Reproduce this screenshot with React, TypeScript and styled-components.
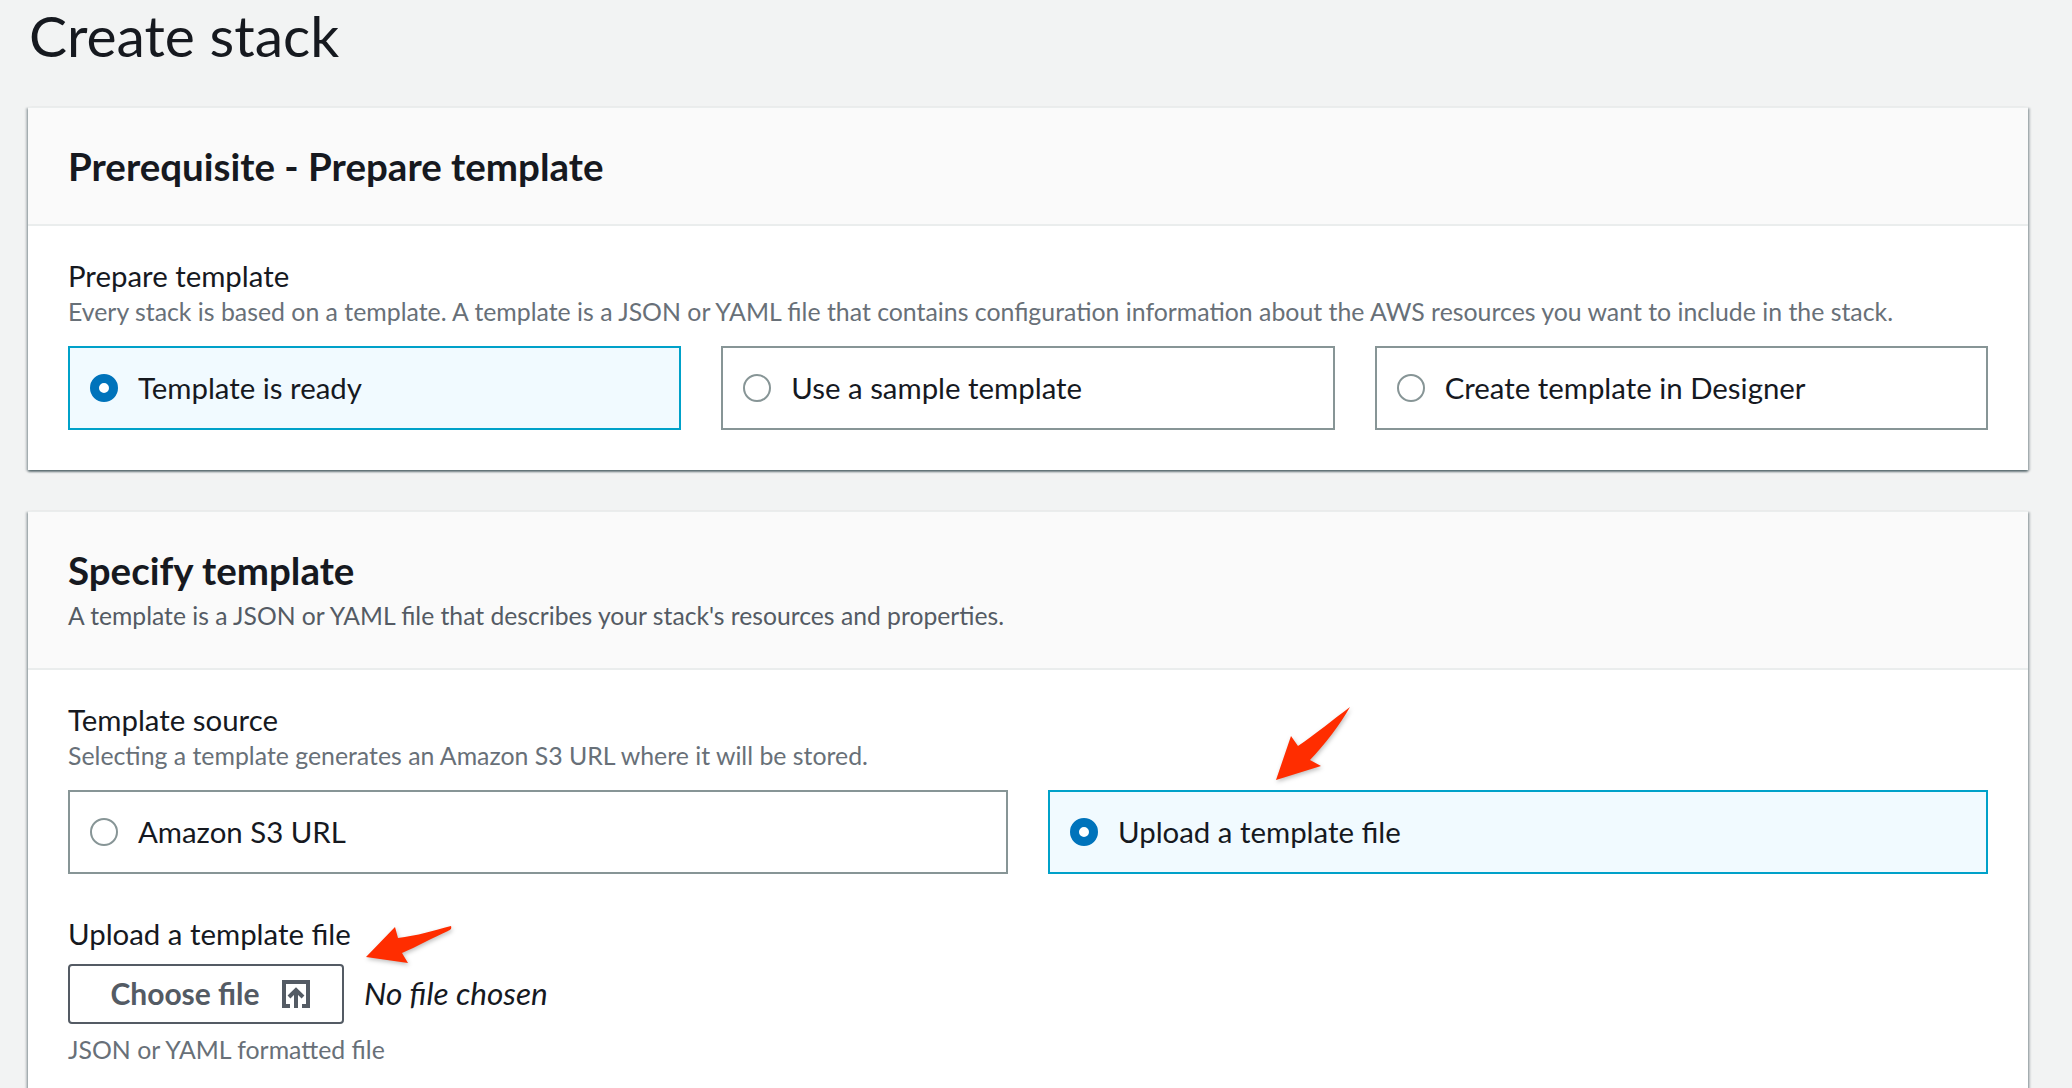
import styled, { createGlobalStyle } from "styled-components";

const GlobalStyle = createGlobalStyle`
    html, body {
        margin: 0;
        padding: 0;
        background-color: #f2f3f3;
        overflow: hidden;
    }
    * {
        box-sizing: border-box;
    }
`;

const Page = styled.div`
    position: relative;
    width: 2072px;
    height: 1088px;
    overflow: hidden;
    padding: 0 44px 0 28px;
    font-family: "Lato", "Open Sans", sans-serif;
    color: #16191f;
`;

const PageTitle = styled.h1`
    margin: 0;
    height: 107px;
    padding: 0 0 0 1px;
    font-size: 57px;
    line-height: 71px;
    font-weight: 400;
`;

const Card = styled.section<{ $grow?: boolean }>`
    background-color: #fff;
    margin-bottom: 41px;
    min-height: ${(props) => (props.$grow ? "700px" : "0")};
    border-top: 1px solid #eaeded;
    box-shadow: 0 2px 2px rgba(0, 28, 36, 0.45), 2px 1px 2px rgba(0, 28, 36, 0.22), -2px 1px 2px rgba(0, 28, 36, 0.22);
`;

const CardHeader = styled.header<{ $height: number }>`
    height: ${(props) => props.$height}px;
    padding: 0 40px;
    display: flex;
    flex-direction: column;
    justify-content: center;
    gap: 6px;
    background-color: #fafafa;
    border-bottom: 2px solid #eaeded;
`;

const CardTitle = styled.h2`
    margin: 0;
    font-size: 38.5px;
    line-height: 46px;
    font-weight: 700;
`;

const CardDescription = styled.p`
    margin: 0;
    font-size: 24.7px;
    line-height: 34px;
    color: #545b64;
`;

const CardBody = styled.div`
    padding: 30px 40px 40px;
`;

const Label = styled.div`
    font-size: 29.4px;
    line-height: 40px;
`;

const Hint = styled.div`
    font-size: 24.85px;
    line-height: 30px;
    color: #687078;
`;

const TileRow = styled.div<{ $columns: number }>`
    display: grid;
    grid-template-columns: repeat(${(props) => props.$columns}, 1fr);
    gap: 40px;
    margin-top: 20px;
`;

const Tile = styled.div<{ $selected?: boolean }>`
    height: 84px;
    padding: 0 20px;
    display: flex;
    align-items: center;
    gap: 20px;
    font-size: 29.4px;
    background-color: ${(props) => (props.$selected ? "#f1faff" : "#fff")};
    border: 2px solid ${(props) => (props.$selected ? "#00a1c9" : "#879596")};
`;

const TileText = styled.span`
    margin-bottom: 2px;
`;

const Radio = styled.span<{ $selected?: boolean }>`
    flex: none;
    width: 28px;
    height: 28px;
    border-radius: 50%;
    background-color: #fff;
    border: ${(props) => (props.$selected ? "9px solid #0073bb" : "2px solid #879596")};
`;

const UploadLabel = styled(Label)`
    margin-top: 40px;
`;

const UploadRow = styled.div`
    display: flex;
    align-items: center;
    gap: 20px;
    margin-top: 10px;
`;

const ChooseButton = styled.button`
    width: 276px;
    height: 60px;
    display: flex;
    align-items: center;
    justify-content: center;
    gap: 22px;
    padding: 0 0 0 8px;
    font-family: inherit;
    font-size: 30px;
    font-weight: 700;
    color: #545b64;
    background-color: #fff;
    border: 2px solid #545b64;
    border-radius: 4px;
`;

const ButtonText = styled.span`
    margin-bottom: 2px;
`;

const NoFile = styled.span`
    margin-bottom: 2px;
    font-size: 31.5px;
    font-style: italic;
`;

const UploadHint = styled(Hint)`
    margin-top: 10px;
`;

const Arrow = styled.svg<{ $left: number; $top: number }>`
    position: absolute;
    left: ${(props) => props.$left}px;
    top: ${(props) => props.$top}px;
    overflow: visible;
    filter: drop-shadow(1px 2px 2px rgba(0, 0, 0, 0.25));
`;

function UploadIcon() {
    return (
        <svg width="28" height="28" viewBox="0 0 28 28" fill="none" stroke="#545b64" strokeWidth="4">
            <path d="M8 26H2V2h24v24h-6" />
            <path d="M14 28V12" />
            <path d="M7 17l7-7 7 7" />
        </svg>
    );
}

const prepareOptions = [
    { label: "Template is ready", selected: true },
    { label: "Use a sample template", selected: false },
    { label: "Create template in Designer", selected: false },
];

const sourceOptions = [
    { label: "Amazon S3 URL", selected: false },
    { label: "Upload a template file", selected: true },
];

function App() {
    return (
        <Page>
            <GlobalStyle />
            <PageTitle>Create stack</PageTitle>

            <Card>
                <CardHeader $height={118}>
                    <CardTitle>Prerequisite - Prepare template</CardTitle>
                </CardHeader>
                <CardBody>
                    <Label>Prepare template</Label>
                    <Hint>Every stack is based on a template. A template is a JSON or YAML file that contains configuration information about the AWS resources you want to include in the stack.</Hint>
                    <TileRow $columns={3}>
                        {prepareOptions.map((option) => (
                            <Tile key={option.label} $selected={option.selected}>
                                <Radio $selected={option.selected} />
                                <TileText>{option.label}</TileText>
                            </Tile>
                        ))}
                    </TileRow>
                </CardBody>
            </Card>

            <Card $grow>
                <CardHeader $height={158}>
                    <CardTitle>Specify template</CardTitle>
                    <CardDescription>A template is a JSON or YAML file that describes your stack's resources and properties.</CardDescription>
                </CardHeader>
                <CardBody>
                    <Label>Template source</Label>
                    <Hint>Selecting a template generates an Amazon S3 URL where it will be stored.</Hint>
                    <TileRow $columns={2}>
                        {sourceOptions.map((option) => (
                            <Tile key={option.label} $selected={option.selected}>
                                <Radio $selected={option.selected} />
                                <TileText>{option.label}</TileText>
                            </Tile>
                        ))}
                    </TileRow>
                    <UploadLabel>Upload a template file</UploadLabel>
                    <UploadRow>
                        <ChooseButton>
                            <ButtonText>Choose file</ButtonText>
                            <UploadIcon />
                        </ChooseButton>
                        <NoFile>No file chosen</NoFile>
                    </UploadRow>
                    <UploadHint>JSON or YAML formatted file</UploadHint>
                </CardBody>
            </Card>

            <Arrow $left={1276} $top={707} width="75" height="74" viewBox="0 0 75 74">
                <path d="M0 73L15 29 22 39C38 28 58 12 74 0 64 18 48 38 34 53L45 59Z" fill="#ff2d00" />
            </Arrow>
            <Arrow $left={366} $top={925} width="86" height="38" viewBox="0 0 86 38">
                <path d="M0 32L29 2 32 13C50 11 70 5 85 1 86 4 84 5 82 6 68 12 50 22 36 28L42 38Z" fill="#ff2d00" />
            </Arrow>
        </Page>
    );
}

export default App;
